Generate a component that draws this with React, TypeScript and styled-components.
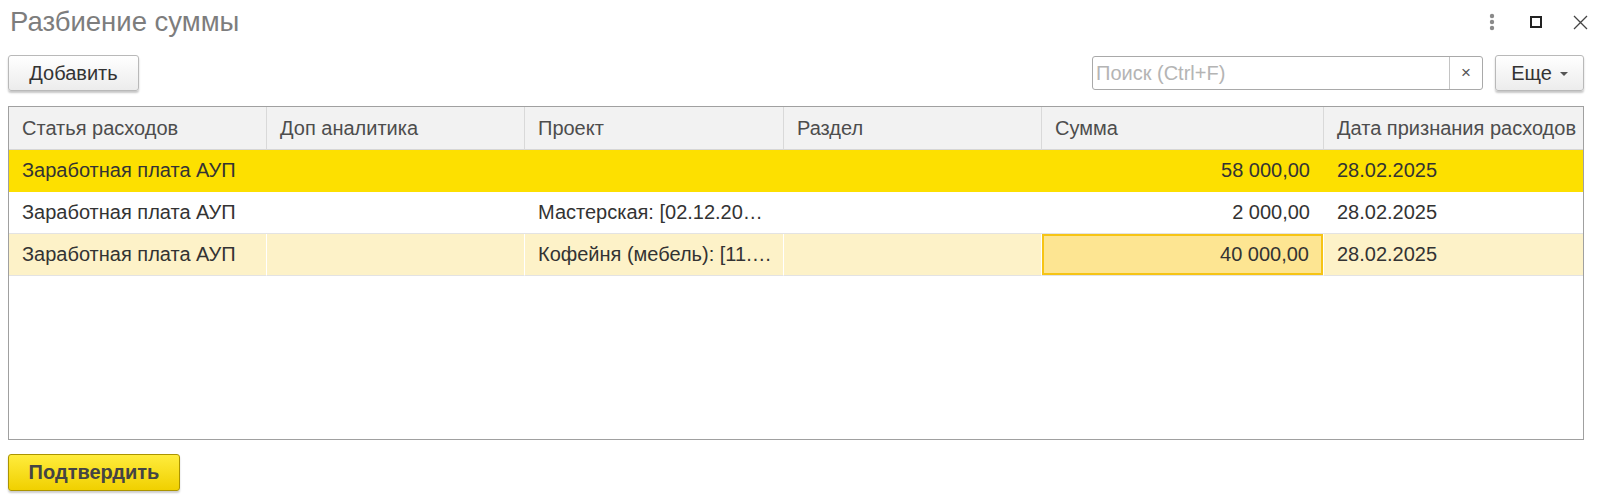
import React from "react";
import styled, { createGlobalStyle } from "styled-components";

const GlobalStyle = createGlobalStyle`
  html, body {
    margin: 0;
    padding: 0;
    background: #fff;
  }
  body {
    font-family: "Liberation Sans", Arial, sans-serif;
    color: #333;
  }
`;

const Form = styled.div`
  display: flex;
  flex-direction: column;
  width: 1603px;
  height: 496px;
  box-sizing: border-box;
  padding: 0 19px 0 8px;
`;

const TitleBar = styled.div`
  display: flex;
  align-items: center;
  justify-content: space-between;
  height: 44px;
  padding-left: 2px;
  margin-right: -19px;
`;

const Title = styled.h1`
  margin: 0;
  font-weight: normal;
  font-size: 27.5px;
  color: #7d7d7d;
  line-height: 44px;
`;

const WindowButtons = styled.div`
  display: flex;
  align-items: center;
  padding-right: 1px;
`;

const WindowButton = styled.span`
  display: flex;
  align-items: center;
  justify-content: center;
  width: 44px;
  height: 30px;
`;

const Toolbar = styled.div`
  display: flex;
  align-items: center;
  height: 38px;
  margin-top: 10px;
`;

const Button = styled.button<{ $width: number }>`
  box-sizing: border-box;
  width: ${(p) => p.$width}px;
  height: 36px;
  border: 1px solid #b9b9b9;
  border-radius: 3px;
  background: linear-gradient(#ffffff, #ececec);
  box-shadow: 0 2px 2px rgba(0, 0, 0, 0.22);
  font-family: inherit;
  font-size: 20px;
  color: #333;
  display: flex;
  align-items: center;
  justify-content: center;
  gap: 8px;
  padding: 0;
`;

const Spacer = styled.div`
  flex: 1;
`;

const Search = styled.div`
  box-sizing: border-box;
  display: flex;
  width: 391px;
  height: 34px;
  border: 1px solid #a9a9a9;
  border-radius: 3px;
  margin-right: 12px;
  background: #fff;
`;

const SearchInput = styled.input`
  flex: 1;
  min-width: 0;
  border: none;
  outline: none;
  padding: 0 3px;
  font-family: inherit;
  font-size: 20px;
  color: #333;
  background: transparent;
  &::placeholder {
    color: #b4b4b4;
  }
`;

const ClearButton = styled.span`
  width: 32px;
  border-left: 1px solid #c4c4c4;
  display: flex;
  align-items: center;
  justify-content: center;
  font-size: 17px;
  color: #555;
`;

const Caret = styled.span`
  width: 0;
  height: 0;
  border-left: 4px solid transparent;
  border-right: 4px solid transparent;
  border-top: 4px solid #555;
  margin-top: 2px;
`;

const Table = styled.div`
  box-sizing: border-box;
  margin-top: 14px;
  height: 334px;
  border: 1px solid #a0a0a0;
  display: grid;
  grid-template-columns: 258px 258px 259px 258px 282px 1fr;
  grid-auto-rows: max-content;
  align-content: start;
`;

const HeadCell = styled.div<{ $last?: boolean }>`
  height: 42px;
  display: flex;
  align-items: center;
  padding-left: 13px;
  background: #f2f2f2;
  color: #4d4d4d;
  font-size: 20px;
  border-bottom: 1px solid #d6d6d6;
  border-right: ${(p) => (p.$last ? "none" : "1px solid #d9d9d9")};
  white-space: nowrap;
  overflow: hidden;
`;

type RowKind = "current" | "plain" | "selected";

const rowBg: Record<RowKind, string> = {
  current: "#fde000",
  plain: "#ffffff",
  selected: "#fdf2c8",
};

const Cell = styled.div<{ $kind: RowKind; $right?: boolean; $last?: boolean; $focus?: boolean }>`
  box-sizing: border-box;
  height: 42px;
  display: flex;
  align-items: center;
  justify-content: ${(p) => (p.$right ? "flex-end" : "flex-start")};
  padding: 0 14px 0 13px;
  font-size: 20px;
  color: #333;
  white-space: nowrap;
  overflow: hidden;
  background: ${(p) => (p.$focus ? "#fde592" : rowBg[p.$kind])};
  border-bottom: 1px solid ${(p) => (p.$kind === "current" ? "#fde000" : "#e3e3e3")};
  border-right: ${(p) =>
    p.$last ? "none" : p.$kind === "selected" ? "1px solid #ffffff" : "none"};
  box-shadow: ${(p) => (p.$focus ? "inset 0 0 0 2px #f6c415" : "none")};
`;

const Footer = styled.div`
  display: flex;
  margin-top: 14px;
`;

const ConfirmButton = styled.button`
  box-sizing: border-box;
  width: 172px;
  height: 37px;
  border: 1px solid #ab9400;
  border-radius: 3px;
  background: linear-gradient(#ffec3d, #f0d000);
  box-shadow: 0 2px 2px rgba(0, 0, 0, 0.2);
  font-family: inherit;
  font-size: 20px;
  font-weight: bold;
  color: #444;
  padding: 0;
`;

const columns = [
  "Статья расходов",
  "Доп аналитика",
  "Проект",
  "Раздел",
  "Сумма",
  "Дата признания расходов",
];

const rows: { kind: RowKind; project: string; sum: string }[] = [
  { kind: "current", project: "", sum: "58 000,00" },
  { kind: "plain", project: "Мастерская: [02.12.20…", sum: "2 000,00" },
  { kind: "selected", project: "Кофейня (мебель): [11.…", sum: "40 000,00" },
];

const MoreIcon = () => (
  <svg width="6" height="18" viewBox="0 0 6 18">
    <circle cx="3" cy="3" r="2.2" fill="#8a8a8a" />
    <circle cx="3" cy="9" r="2.2" fill="#8a8a8a" />
    <circle cx="3" cy="15" r="2.2" fill="#8a8a8a" />
  </svg>
);

const MaximizeIcon = () => (
  <svg width="12" height="12" viewBox="0 0 12 12">
    <rect x="1" y="1" width="10" height="10" fill="none" stroke="#222" strokeWidth="2" />
  </svg>
);

const CloseIcon = () => (
  <svg width="15" height="15" viewBox="0 0 15 15">
    <path d="M1 1L14 14M14 1L1 14" stroke="#444" strokeWidth="1.3" />
  </svg>
);

export default function App() {
  return (
    <>
      <GlobalStyle />
      <Form>
        <TitleBar>
          <Title>Разбиение суммы</Title>
          <WindowButtons>
            <WindowButton>
              <MoreIcon />
            </WindowButton>
            <WindowButton>
              <MaximizeIcon />
            </WindowButton>
            <WindowButton>
              <CloseIcon />
            </WindowButton>
          </WindowButtons>
        </TitleBar>

        <Toolbar>
          <Button $width={131}>Добавить</Button>
          <Spacer />
          <Search>
            <SearchInput placeholder="Поиск (Ctrl+F)" />
            <ClearButton>×</ClearButton>
          </Search>
          <Button $width={89}>
            Еще <Caret />
          </Button>
        </Toolbar>

        <Table>
          {columns.map((c, i) => (
            <HeadCell key={c} $last={i === columns.length - 1}>
              {c}
            </HeadCell>
          ))}
          {rows.map((r, i) => (
            <React.Fragment key={i}>
              <Cell $kind={r.kind}>Заработная плата АУП</Cell>
              <Cell $kind={r.kind} />
              <Cell $kind={r.kind}>{r.project}</Cell>
              <Cell $kind={r.kind} />
              <Cell $kind={r.kind} $right $focus={r.kind === "selected"}>
                {r.sum}
              </Cell>
              <Cell $kind={r.kind} $last>
                28.02.2025
              </Cell>
            </React.Fragment>
          ))}
        </Table>

        <Footer>
          <ConfirmButton>Подтвердить</ConfirmButton>
        </Footer>
      </Form>
    </>
  );
}
